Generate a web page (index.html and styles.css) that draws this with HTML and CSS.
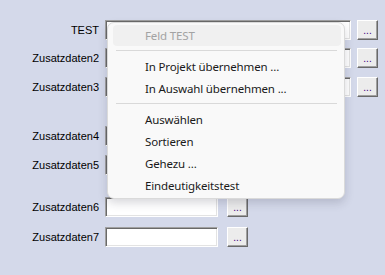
FILE: index.html
```html
<!DOCTYPE html>
<html lang="de">
<head>
    <meta charset="UTF-8">
    <title>Zusatzdaten</title>
    <link rel="stylesheet" href="styles.css">
</head>
<body>
    <div class="form">
        <div class="row row-1">
            <label class="caption">TEST</label>
            <input class="field wide" type="text">
            <button class="more">...</button>
        </div>
        <div class="row row-2">
            <label class="caption">Zusatzdaten2</label>
            <input class="field wide" type="text">
            <button class="more">...</button>
        </div>
        <div class="row row-3">
            <label class="caption">Zusatzdaten3</label>
            <input class="field wide" type="text">
            <button class="more">...</button>
        </div>
        <div class="row row-4">
            <label class="caption">Zusatzdaten4</label>
            <input class="field" type="text">
            <button class="more short">...</button>
        </div>
        <div class="row row-5">
            <label class="caption">Zusatzdaten5</label>
            <input class="field" type="text">
            <button class="more short">...</button>
        </div>
        <div class="row row-6">
            <label class="caption">Zusatzdaten6</label>
            <input class="field" type="text">
            <button class="more short">...</button>
        </div>
        <div class="row row-7">
            <label class="caption">Zusatzdaten7</label>
            <input class="field" type="text">
            <button class="more short">...</button>
        </div>

        <!-- context menu over the TEST field -->
        <ul class="menu">
            <li class="menu-item header">Feld TEST</li>
            <li class="separator"></li>
            <li class="menu-item">In Projekt übernehmen ...</li>
            <li class="menu-item">In Auswahl übernehmen ...</li>
            <li class="separator"></li>
            <li class="menu-item">Auswählen</li>
            <li class="menu-item">Sortieren</li>
            <li class="menu-item">Gehezu ...</li>
            <li class="menu-item">Eindeutigkeitstest</li>
        </ul>
    </div>
</body>
</html>
```

FILE: styles.css
```css
* {
    margin: 0;
    padding: 0;
    box-sizing: border-box;
}

body {
    background-color: #d4d9ea;
    font-family: "Liberation Sans", Arial, sans-serif;
    font-size: 11px;
    color: #000;
    width: 385px;
    height: 275px;
    overflow: hidden;
}

.form {
    position: relative;
    padding-top: 20px;
}

.row {
    display: flex;
    align-items: center;
    height: 20px;
}

.row-2 { margin-top: 8px; }
.row-3 { margin-top: 9px; }
.row-4 { margin-top: 29px; }
.row-5 { margin-top: 9px; }
.row-6 { margin-top: 22px; }
.row-7 { margin-top: 10px; }

.caption {
    width: 99px;
    text-align: right;
    margin-right: 6px;
}

.field {
    width: 113px;
    height: 20px;
    background: #fff;
    border: 1px solid;
    border-color: #a0a0a0 #fff #fff #a0a0a0;
    box-shadow: inset 1px 1px 0 #696969, inset -1px -1px 0 #e3e3e3;
    outline: none;
}

.field.wide {
    width: 246px;
}

.more {
    width: 21px;
    height: 20px;
    margin-left: 6px;
    background: #ececec;
    border: 1px solid;
    border-color: #fff #696969 #696969 #fff;
    box-shadow: inset -1px -1px 0 #a0a0a0;
    font-family: "Liberation Sans", Arial, sans-serif;
    font-size: 10px;
    color: #400080;
    line-height: 14px;
    padding-top: 2px;
}

.more.short {
    margin-left: 9px;
}

.menu {
    position: absolute;
    left: 107px;
    top: 22px;
    width: 238px;
    height: 177px;
    list-style: none;
    background: #f9f9f9;
    border: 1px solid #dadada;
    border-radius: 7px;
    box-shadow: 0 4px 10px rgba(40, 40, 60, 0.18);
    padding: 2px 0 2px;
    font-family: "Noto Sans", "Open Sans", sans-serif;
    font-size: 11.5px;
    letter-spacing: -0.15px;
    color: #1a1a1a;
}

.menu-item {
    height: 22px;
    line-height: 23px;
    margin: 0 3px 0 5px;
    padding-left: 32px;
    border-radius: 4px;
    white-space: nowrap;
}

.menu-item.header {
    background: #f0f0f0;
    color: #a3a3a3;
    height: 21px;
    line-height: 22px;
}

.separator {
    height: 1px;
    margin: 4px 7px 4px 8px;
    background: #d9d9d9;
}
```
